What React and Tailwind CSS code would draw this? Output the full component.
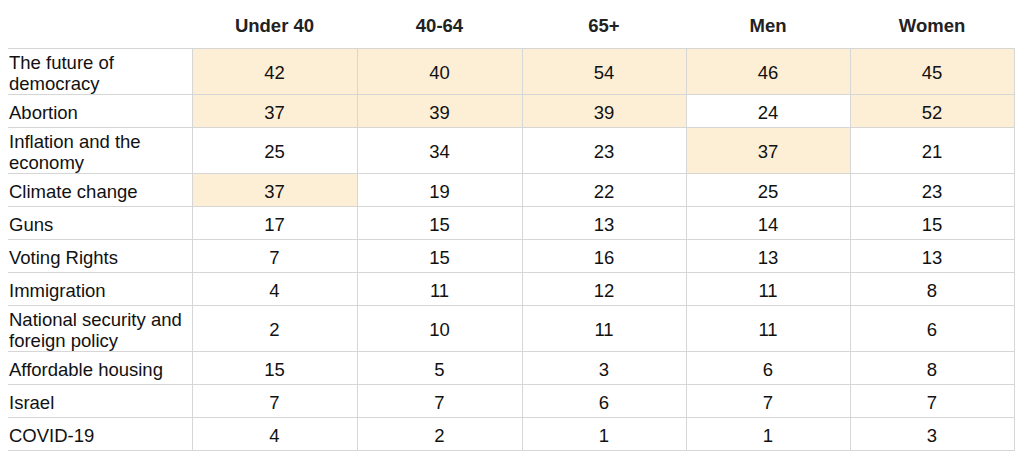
import React from 'react';

const columns = ['Under 40', '40-64', '65+', 'Men', 'Women'];

// hl marks the shaded (top-ranked) cells per row
const rows = [
  { label: 'The future of democracy', values: [42, 40, 54, 46, 45], hl: [1, 1, 1, 1, 1], tall: true },
  { label: 'Abortion', values: [37, 39, 39, 24, 52], hl: [1, 1, 1, 0, 1] },
  { label: 'Inflation and the economy', values: [25, 34, 23, 37, 21], hl: [0, 0, 0, 1, 0], tall: true },
  { label: 'Climate change', values: [37, 19, 22, 25, 23], hl: [1, 0, 0, 0, 0] },
  { label: 'Guns', values: [17, 15, 13, 14, 15] },
  { label: 'Voting Rights', values: [7, 15, 16, 13, 13] },
  { label: 'Immigration', values: [4, 11, 12, 11, 8] },
  { label: 'National security and foreign policy', values: [2, 10, 11, 11, 6], tall: true },
  { label: 'Affordable housing', values: [15, 5, 3, 6, 8] },
  { label: 'Israel', values: [7, 7, 6, 7, 7] },
  { label: 'COVID-19', values: [4, 2, 1, 1, 3] },
];

export default function App() {
  return (
    <div className="w-[1024px] h-[464px] bg-white pl-2 text-[18.5px] text-[#111] font-['Liberation_Sans',Arial,sans-serif]">
      <table className="border-collapse table-fixed w-[1006px]">
        <colgroup>
          <col className="w-[184px]" />
          <col className="w-[165px]" />
          <col className="w-[165px]" />
          <col className="w-[164px]" />
          <col className="w-[164px]" />
          <col className="w-[164px]" />
        </colgroup>
        <thead>
          <tr className="h-[48px]">
            <th></th>
            {columns.map(c => (
              <th key={c} className="font-bold text-[#222] text-center align-middle pt-[4px]">{c}</th>
            ))}
          </tr>
        </thead>
        <tbody>
          {rows.map(r => (
            <tr key={r.label} className={`${r.tall ? 'h-[46px]' : 'h-[33px]'} border-y border-[#d6d6d6]`}>
              <td className="pl-[1px] pr-2 pt-[3px] leading-[21px] align-middle">{r.label}</td>
              {r.values.map((v, i) => (
                <td
                  key={i}
                  className={`text-center align-middle pt-[3px] leading-[21px] border-x border-[#d6d6d6] ${r.hl && r.hl[i] ? 'bg-[#fdefd6]' : ''}`}
                >
                  {v}
                </td>
              ))}
            </tr>
          ))}
        </tbody>
      </table>
    </div>
  );
}
